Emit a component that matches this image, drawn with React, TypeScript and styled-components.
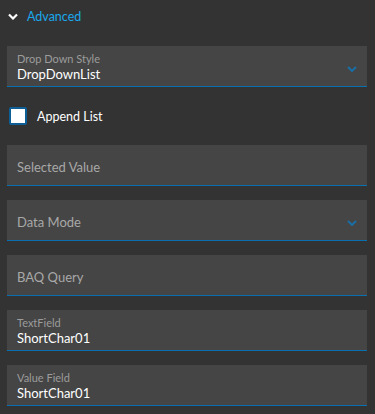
import React from "react";
import styled, { createGlobalStyle } from "styled-components";

const Global = createGlobalStyle`
  html, body { margin: 0; padding: 0; background: #333333; }
  body { font-family: Lato, "Noto Sans", sans-serif; }
`;

const Panel = styled.div`
  width: 375px;
  height: 414px;
  background: #333333;
  box-sizing: border-box;
  padding: 0 8px 0 7px;
  display: flex;
  flex-direction: column;
`;

const Header = styled.div`
  display: flex;
  align-items: center;
  height: 32px;
  gap: 9px;
  padding-left: 1px;
  color: #1aa7ec;
  font-size: 12.5px;
`;

const Fields = styled.div<{ $top?: number }>`
  display: flex;
  flex-direction: column;
  gap: 14px;
  margin-top: ${(p) => p.$top ?? 0}px;
`;

const Field = styled.div`
  position: relative;
  height: 40px;
  box-sizing: content-box;
  background: #454545;
  border-bottom: 1px solid #0a6fae;
  padding: 0 10px;
  display: flex;
  flex-direction: column;
  justify-content: center;
`;

const Inner = styled.div`
  padding-top: 3px;
`;

const Label = styled.div<{ $small?: boolean }>`
  color: ${(p) => (p.$small ? "#9c9c9c" : "#a8a8a8")};
  font-size: ${(p) => (p.$small ? "11px" : "13px")};
  line-height: ${(p) => (p.$small ? "14px" : "16px")};
`;

const Value = styled.div`
  color: #ffffff;
  font-size: 13px;
  line-height: 17px;
`;

const Chevron = styled.svg`
  position: absolute;
  right: 10px;
  top: 20px;
`;

const CheckRow = styled.div`
  display: flex;
  align-items: center;
  gap: 10px;
  height: 58px;
  padding-left: 2px;
  color: #ffffff;
  font-size: 12.5px;
`;

const Box = styled.div`
  width: 14px;
  height: 14px;
  background: #ffffff;
  border: 2px solid #0d5f95;
  border-radius: 2px;
`;

const Down = () => (
  <Chevron width="10" height="6" viewBox="0 0 10 6">
    <path d="M1 1 L5 5 L9 1" stroke="#1a6ea6" strokeWidth="2" fill="none" />
  </Chevron>
);

export default function App() {
  return (
    <Panel>
      <Global />
      <Header>
        <svg width="10" height="7" viewBox="0 0 10 7">
          <path d="M1 1.5 L5 5.5 L9 1.5" stroke="#ffffff" strokeWidth="2.2" fill="none" />
        </svg>
        <span>Advanced</span>
      </Header>
      <Fields $top={14}>
        <Field>
          <Inner>
            <Label $small>Drop Down Style</Label>
            <Value>DropDownList</Value>
          </Inner>
          <Down />
        </Field>
      </Fields>
      <CheckRow>
        <Box />
        <span>Append List</span>
      </CheckRow>
      <Fields>
        <Field>
          <Inner>
            <Label>Selected Value</Label>
          </Inner>
        </Field>
        <Field>
          <Inner>
            <Label>Data Mode</Label>
          </Inner>
          <Down />
        </Field>
        <Field>
          <Inner>
            <Label>BAQ Query</Label>
          </Inner>
        </Field>
        <Field>
          <Inner>
            <Label $small>TextField</Label>
            <Value>ShortChar01</Value>
          </Inner>
        </Field>
        <Field>
          <Inner>
            <Label $small>Value Field</Label>
            <Value>ShortChar01</Value>
          </Inner>
        </Field>
      </Fields>
    </Panel>
  );
}
